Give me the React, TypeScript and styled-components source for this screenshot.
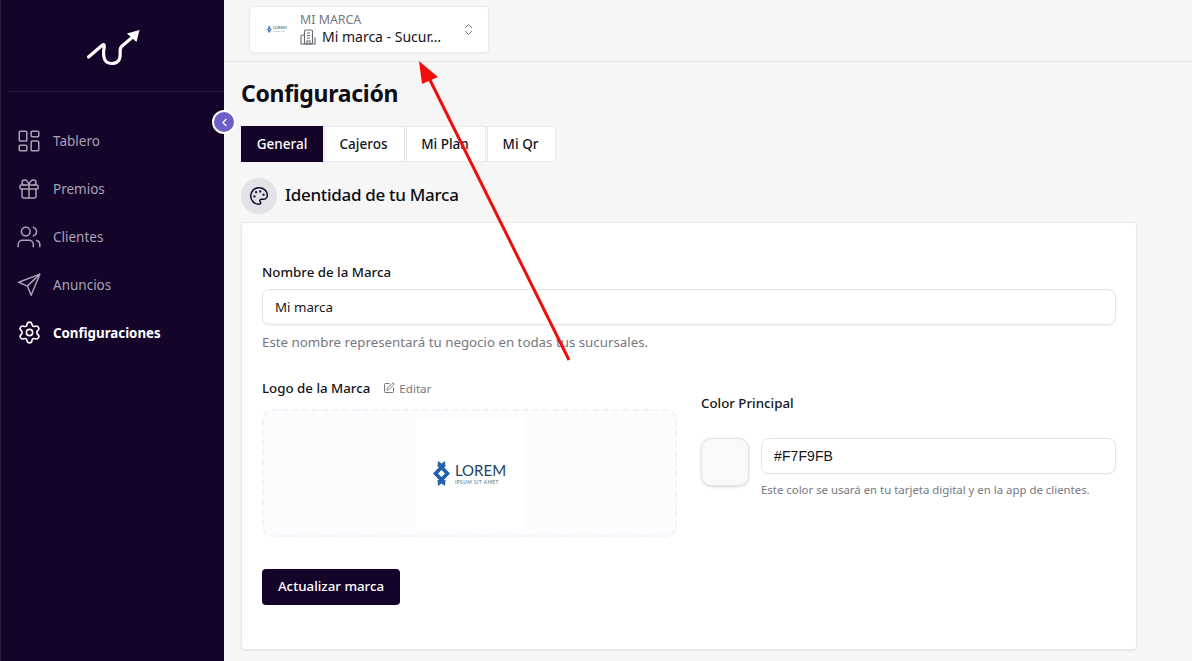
import React from "react";
import styled, { createGlobalStyle } from "styled-components";
import {
  ChevronLeft,
  ChevronsUpDown,
  Gift,
  LayoutDashboard,
  Palette,
  Settings,
  SquarePen,
  Users,
} from "lucide-react";

const FONT = `"Noto Sans", "Open Sans", sans-serif`;
const INK = "#14042a";

const GlobalStyle = createGlobalStyle`
  * { box-sizing: border-box; }
  html, body { margin: 0; padding: 0; height: 100%; }
  body {
    font-family: ${FONT};
    background: #f6f6f6;
    color: #14141a;
    overflow: hidden;
  }
`;

const Page = styled.div`
  position: relative;
  display: flex;
  width: 1192px;
  height: 661px;
  overflow: hidden;
`;

const Sidebar = styled.aside`
  position: relative;
  flex: 0 0 224px;
  background: ${INK};
  border-left: 1px solid #2a2038;
`;

const SideLogo = styled.div`
  display: flex;
  align-items: center;
  justify-content: center;
  height: 92px;
  margin-left: 8px;
  border-bottom: 1px solid #2c1e42;
  padding-right: 8px;
`;

const CollapseButton = styled.button`
  position: absolute;
  top: 110px;
  right: -12px;
  z-index: 3;
  display: flex;
  align-items: center;
  justify-content: center;
  width: 24px;
  height: 24px;
  padding: 0;
  border: 2px solid #fff;
  border-radius: 50%;
  background: #6e5fc7;
  color: #fff;
`;

const Nav = styled.nav`
  display: flex;
  flex-direction: column;
  gap: 12px;
  padding: 31px 0 0 15px;
`;

const NavItem = styled.a<{ $active?: boolean }>`
  display: flex;
  align-items: center;
  gap: 11px;
  height: 36px;
  padding-bottom: 1px;
  font-size: ${(p) => (p.$active ? "13.3px" : "13.5px")};
  font-weight: ${(p) => (p.$active ? 700 : 400)};
  color: ${(p) => (p.$active ? "#ffffff" : "#a9a2b4")};
`;

const NavIcon = styled.span`
  display: flex;
  align-items: center;
  justify-content: center;
  width: 26px;
  height: 26px;
`;

const Main = styled.main`
  flex: 1;
  min-width: 0;
`;

const TopBar = styled.header`
  display: flex;
  align-items: flex-start;
  height: 62px;
  padding: 6px 0 0 25px;
  border-bottom: 1px solid #e4e4e4;
`;

const BrandSwitch = styled.div`
  display: flex;
  align-items: center;
  width: 240px;
  height: 47px;
  padding: 0 12px 0 17px;
  background: #fff;
  border: 1px solid #e9e9ec;
  border-radius: 4px;
  box-shadow: 0 1px 2px rgba(0, 0, 0, 0.04);
`;

const BrandThumb = styled.div`
  flex: 0 0 33px;
`;

const BrandText = styled.div`
  flex: 1;
  min-width: 0;
`;

const BrandKicker = styled.div`
  font-size: 12.4px;
  line-height: 14px;
  color: #77777f;
`;

const BrandName = styled.div`
  display: flex;
  align-items: center;
  gap: 6px;
  margin-top: 1px;
  font-size: 14px;
  line-height: 18px;
  color: #14141a;
`;

const Content = styled.div`
  padding: 15px 55px 0 17px;
`;

const Title = styled.h1`
  margin: 0;
  font-size: 23px;
  line-height: 32px;
  letter-spacing: -0.3px;
  font-weight: 700;
  color: #0c0c12;
`;

const Tabs = styled.div`
  display: flex;
  gap: 1px;
  margin-top: 17px;
`;

const Tab = styled.button<{ $active?: boolean; $width: number }>`
  width: ${(p) => p.$width}px;
  height: 36px;
  padding: ${(p) => (p.$active ? "0" : "0 2px 0 0")};
  font-family: ${FONT};
  font-size: 13.5px;
  font-weight: 500;
  color: ${(p) => (p.$active ? "#ffffff" : "#14141a")};
  background: ${(p) => (p.$active ? INK : "#ffffff")};
  border: 1px solid ${(p) => (p.$active ? INK : "#e9e9ec")};
`;

const SectionHead = styled.div`
  display: flex;
  align-items: center;
  gap: 8px;
  margin-top: 16px;
`;

const SectionIcon = styled.div`
  display: flex;
  align-items: center;
  justify-content: center;
  width: 36px;
  height: 36px;
  border-radius: 50%;
  background: #e3e3e7;
  color: ${INK};
`;

const SectionTitle = styled.h2`
  margin: 0 0 2px;
  font-size: 17px;
  line-height: 24px;
  letter-spacing: -0.3px;
  font-weight: 500;
  color: #0c0c12;
`;

const Card = styled.section`
  margin-top: 8px;
  height: 428px;
  padding: 40px 20px 0;
  background: #fff;
  border: 1px solid #e9e9ec;
  border-radius: 4px;
  box-shadow: 0 1px 2px rgba(0, 0, 0, 0.07);
`;

const Label = styled.label`
  display: block;
  font-size: 13.3px;
  line-height: 18px;
  font-weight: 500;
  color: #14141a;
`;

const Input = styled.div<{ $mono?: boolean }>`
  display: flex;
  align-items: center;
  height: 36px;
  padding: 0 12px 1px;
  font-family: ${(p) => (p.$mono ? `"Liberation Sans", sans-serif` : FONT)};
  font-size: ${(p) => (p.$mono ? "14px" : "13.3px")};
  letter-spacing: ${(p) => (p.$mono ? "0.1px" : "0")};
  color: #14141a;
  background: #fff;
  border: 1px solid #e4e4e8;
  border-radius: 8px;
  box-shadow: 0 1px 2px rgba(0, 0, 0, 0.04);
`;

const NameInput = styled(Input)`
  margin-top: 8px;
`;

const Help = styled.p`
  margin: 8px 0 0;
  font-size: 13.3px;
  line-height: 18px;
  color: #77777f;
`;

const SmallHelp = styled(Help)`
  margin-top: 9px;
  font-size: 11.4px;
  line-height: 14px;
`;

const Columns = styled.div`
  display: grid;
  grid-template-columns: 1fr 1fr;
  gap: 24px;
  margin-top: 28px;
`;

const LabelRow = styled.div`
  display: flex;
  align-items: center;
  gap: 13px;
`;

const EditLink = styled.span`
  display: flex;
  align-items: center;
  gap: 4px;
  font-size: 11.6px;
  color: #77777f;
`;

const DropZone = styled.div`
  display: flex;
  align-items: center;
  justify-content: center;
  margin-top: 12px;
  height: 128px;
  background: #fafcfd;
  border: 2px dashed #f1f3f6;
  border-radius: 10px;
`;

const LogoFrame = styled.div`
  display: flex;
  align-items: center;
  justify-content: center;
  width: 108px;
  height: 110px;
  background: #fff;
`;

const ColorColumn = styled.div`
  padding-top: 15px;
`;

const ColorRow = styled.div`
  display: flex;
  gap: 12px;
  margin-top: 26px;
`;

const Swatch = styled.div`
  flex: 0 0 48px;
  height: 48px;
  background: #f7f9fb;
  border: 1px solid #e4e4e8;
  border-radius: 10px;
  box-shadow: 0 1px 3px rgba(0, 0, 0, 0.16);
`;

const ColorField = styled.div`
  flex: 1;
`;

const SubmitButton = styled.button`
  display: block;
  width: 138px;
  height: 36px;
  margin-top: 32px;
  padding: 0 0 2px;
  font-family: ${FONT};
  font-size: 13.3px;
  font-weight: 500;
  color: #fff;
  background: ${INK};
  border: 0;
  border-radius: 4px;
`;

const LoremLockup = styled.div<{ $scale: number }>`
  display: flex;
  align-items: center;
  gap: ${(p) => 5 * p.$scale}px;
  color: #1e3f66;
`;

const LoremWords = styled.div<{ $scale: number }>`
  font-family: "Lato", sans-serif;
  font-size: ${(p) => 15 * p.$scale}px;
  line-height: ${(p) => 18 * p.$scale}px;
`;

const LoremSub = styled.div<{ $scale: number }>`
  font-size: ${(p) => 4.8 * p.$scale}px;
  line-height: ${(p) => 6 * p.$scale}px;
  letter-spacing: ${(p) => 0.5 * p.$scale}px;
  color: #4f6a88;
  white-space: nowrap;
`;

const ArrowOverlay = styled.svg`
  position: absolute;
  inset: 0;
  z-index: 5;
  pointer-events: none;
`;

function Lorem({ scale }: { scale: number }) {
  return (
    <LoremLockup $scale={scale}>
      <svg width={17 * scale} height={25 * scale} viewBox="0 0 17 25">
        <path d="M5 0l3.500 2.500L12 0l.5 6h-8z" fill="#2a63a8" />
        <path d="M5 25l3.500-2.500L12 25l.5-6h-8z" fill="#2a63a8" />
        <path d="M8.500 3.500 0 12.500l8.500 9 8.500-9zM8.500 9l3.500 3.500-3.500 3.500L5 12.500z" fill="#1f5fb0" fillRule="evenodd" />
      </svg>
      <LoremWords $scale={scale}>
        LOREM
        <LoremSub $scale={scale}>IPSUM SIT AMET</LoremSub>
      </LoremWords>
    </LoremLockup>
  );
}

const navItems = [
  { label: "Tablero", icon: <LayoutDashboard size={26} strokeWidth={1.4} /> },
  { label: "Premios", icon: <Gift size={24} strokeWidth={1.5} /> },
  { label: "Clientes", icon: <Users size={26} strokeWidth={1.4} /> },
  {
    label: "Anuncios",
    icon: (
      <svg width="26" height="26" viewBox="0 0 24 24" fill="none" stroke="currentColor" strokeWidth="1.4" strokeLinejoin="round">
        <path d="M22 2 2.500 9.500l8 3.500 3.500 8.500z" />
        <path d="M22 2 10.500 13" />
      </svg>
    ),
  },
  { label: "Configuraciones", icon: <Settings size={25} strokeWidth={1.5} />, active: true },
];

export default function App() {
  return (
    <Page>
      <GlobalStyle />
      <Sidebar>
        <SideLogo>
          <svg width="54" height="40" viewBox="85.500 26 54 40" fill="none">
            <path
              d="M88 57 102 45c1.500-1 2 0 1.700 2-.7 4-1.200 8 .3 12 2 5.500 12 6.500 15 0 2-5-1-9 2-12.500l10-8.500"
              stroke="#fff"
              strokeWidth="3.200"
              strokeLinecap="round"
              strokeLinejoin="round"
            />
            <path d="M139 30 126.500 33.500 136 42z" fill="#fff" />
          </svg>
        </SideLogo>
        <CollapseButton>
          <ChevronLeft size={13} strokeWidth={2} />
        </CollapseButton>
        <Nav>
          {navItems.map((item) => (
            <NavItem key={item.label} $active={item.active}>
              <NavIcon>{item.icon}</NavIcon>
              {item.label}
            </NavItem>
          ))}
        </Nav>
      </Sidebar>

      <Main>
        <TopBar>
          <BrandSwitch>
            <BrandThumb>
              <Lorem scale={0.27} />
            </BrandThumb>
            <BrandText>
              <BrandKicker>MI MARCA</BrandKicker>
              <BrandName>
                <svg width="16" height="16" viewBox="0 0 16 16" fill="none" stroke="#66666e" strokeWidth="1.1">
                  <rect x="4.500" y="1" width="8" height="14" rx="1.500" />
                  <path d="M4.500 6H2.500A1.500 1.500 0 0 0 1 7.500V15h14V8.500M7 4h3M7 6.500h3M7 9h3M7 15v-3h3v3" />
                </svg>
                Mi marca - Sucur…
              </BrandName>
            </BrandText>
            <ChevronsUpDown size={15} color="#66666e" strokeWidth={1.5} />
          </BrandSwitch>
        </TopBar>

        <Content>
          <Title>Configuración</Title>
          <Tabs>
            <Tab $active $width={82}>General</Tab>
            <Tab $width={81}>Cajeros</Tab>
            <Tab $width={80}>Mi Plan</Tab>
            <Tab $width={69}>Mi Qr</Tab>
          </Tabs>
          <SectionHead>
            <SectionIcon>
              <Palette size={20} strokeWidth={1.8} />
            </SectionIcon>
            <SectionTitle>Identidad de tu Marca</SectionTitle>
          </SectionHead>
          <Card>
            <Label>Nombre de la Marca</Label>
            <NameInput>Mi marca</NameInput>
            <Help>Este nombre representará tu negocio en todas tus sucursales.</Help>
            <Columns>
              <div>
                <LabelRow>
                  <Label>Logo de la Marca</Label>
                  <EditLink>
                    <SquarePen size={12} />
                    Editar
                  </EditLink>
                </LabelRow>
                <DropZone>
                  <LogoFrame>
                    <Lorem scale={1} />
                  </LogoFrame>
                </DropZone>
              </div>
              <ColorColumn>
                <Label>Color Principal</Label>
                <ColorRow>
                  <Swatch />
                  <ColorField>
                    <Input $mono>#F7F9FB</Input>
                    <SmallHelp>Este color se usará en tu tarjeta digital y en la app de clientes.</SmallHelp>
                  </ColorField>
                </ColorRow>
              </ColorColumn>
            </Columns>
            <SubmitButton>Actualizar marca</SubmitButton>
          </Card>
        </Content>
      </Main>

      <ArrowOverlay width="1192" height="661" viewBox="0 0 1192 661">
        <path d="M569 360 428 76" stroke="#f20d0d" strokeWidth="3" fill="none" />
        <path d="M419 61 422 84 438 77z" fill="#f20d0d" />
      </ArrowOverlay>
    </Page>
  );
}
